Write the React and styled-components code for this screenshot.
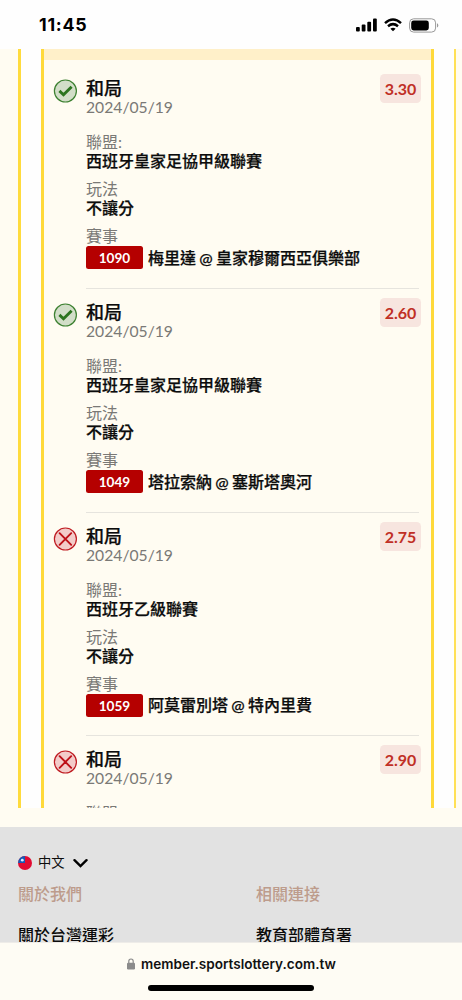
import React from 'react';
import styled, { createGlobalStyle } from 'styled-components';

const GlobalStyle = createGlobalStyle`
  * { box-sizing: border-box; }
  body { margin: 0; background: #fffcf2; }
`;

const Screen = styled.div`
  width: 462px;
  height: 1000px;
  overflow: hidden;
  display: flex;
  flex-direction: column;
  background: #fffcf2;
  color: #0c0c0c;
  font-family: Lato, 'Noto Sans CJK TC', sans-serif;
  font-size: 16px;
  white-space: nowrap;
`;

const StatusBar = styled.header`
  flex: 0 0 49px;
  display: flex;
  justify-content: space-between;
  align-items: center;
  padding: 1px 23px 0 39px;
  background: #fefefe;
`;

const Clock = styled.span`
  font: 700 17.8px/24px Inter, sans-serif;
  letter-spacing: 0.75px;
  color: #000;
`;

const StatusIcons = styled.div`
  display: flex;
  align-items: center;
  gap: 7px;
  svg { display: block; }
`;

const Page = styled.main`
  flex: 0 0 778px;
  height: 778px;
  padding-bottom: 19px;
  display: flex;
`;

const OuterCard = styled.div`
  width: 438px;
  margin-left: 18px;
  display: flex;
  border-left: 3px solid #ffdb3d;
  border-right: 2px solid #ffe056;
  background: #fefefe;
  padding: 0 20px;
`;

const Ticket = styled.section`
  flex: 1;
  overflow: hidden;
  border: solid #ffd93a;
  border-width: 0 3px;
  background: #fffcf2;
`;

const Band = styled.div`
  height: 11px;
  margin-bottom: 5px;
  background: #fff0c9;
`;

const Bet = styled.article`
  height: 223.8px;
  display: flex;
  padding: 0 12px 0 9px;
`;

const IconSlot = styled.div`
  flex: 0 0 33px;
  padding-top: 14px;
  svg { display: block; }
`;

const BetBody = styled.div`
  flex: 1;
  border-bottom: 1.5px solid #e6e4de;
`;

const BetHead = styled.div`
  display: flex;
  justify-content: space-between;
  height: 52px;
  padding-top: 11px;
`;

const Title = styled.div`
  font-size: 18px;
  font-weight: 500;
  line-height: 24px;
  -webkit-text-stroke: 0.25px currentColor;
`;

const DateText = styled.div`
  color: #7a7976;
  font-size: 15.7px;
  line-height: 14px;
`;

const Odds = styled.div`
  width: 41px;
  height: 29px;
  margin: -2px -2px 0 0;
  border-radius: 4.5px;
  background: #f7e5df;
  color: #c02f25;
  font-size: 16px;
  font-weight: 700;
  line-height: 30px;
  text-align: center;
`;

const Field = styled.div`
  height: 47.2px;
  padding-top: 15px;
`;

const Label = styled.div`
  color: #7a7976;
  line-height: 19px;
`;

const Value = styled.div`
  display: flex;
  align-items: center;
  gap: 5px;
  font-weight: 500;
  line-height: 19px;
  word-spacing: -0.8px;
  -webkit-text-stroke: 0.25px currentColor;
`;

const MatchNo = styled.span`
  width: 57px;
  height: 23px;
  margin-top: 1px;
  border-radius: 2.5px;
  background: #b50000;
  color: #fff;
  font-size: 13.6px;
  font-weight: 700;
  line-height: 24px;
  text-align: center;
  -webkit-text-stroke: 0;
`;

const Footer = styled.footer`
  flex: 0 0 115px;
  overflow: hidden;
  padding: 26px 18px 0;
  background: #e2e2e2;
`;

const Language = styled.div`
  display: flex;
  align-items: center;
  height: 20px;
  font-size: 13.3px;
  span { margin: -2px 8px 0 6px; line-height: 20px; }
  svg { display: block; }
`;

const Links = styled.div`
  display: grid;
  grid-template-columns: 238px 1fr;
  line-height: 24px;
`;

const LinkHeading = styled.div`
  margin: 9px 0 17px;
  color: #bd9c8c;
  font-weight: 500;
`;

const LinkItem = styled.div`
  font-weight: 500;
`;

const BrowserBar = styled.div`
  flex: 1;
  display: flex;
  flex-direction: column;
  align-items: center;
  background: #fefcf4;
  border-top: 1px solid #eeece8;
`;

const Address = styled.div`
  display: flex;
  align-items: center;
  gap: 6px;
  height: 20px;
  margin: 11px 0 11px 1px;
  font: 600 13.55px/20px Inter, sans-serif;
  color: #111;
`;

const HomeIndicator = styled.div`
  width: 166px;
  height: 6px;
  border-radius: 3px;
  background: #000;
`;

const bets = [
  { won: true, odds: '3.30', league: '西班牙皇家足協甲級聯賽', no: '1090', match: '梅里達 @ 皇家穆爾西亞俱樂部' },
  { won: true, odds: '2.60', league: '西班牙皇家足協甲級聯賽', no: '1049', match: '塔拉索納 @ 塞斯塔奧河' },
  { won: false, odds: '2.75', league: '西班牙乙級聯賽', no: '1059', match: '阿莫雷別塔 @ 特內里費' },
  { won: false, odds: '2.90', league: '', no: '', match: '' },
];

function ResultIcon({ won }) {
  return (
    <svg width="24" height="24" viewBox="0 0 24 24" fill="none">
      <circle cx="12.4" cy="12" r="11" fill={won ? '#d2dec8' : '#f3ccc9'} stroke={won ? '#3d8131' : '#bf1c22'} strokeWidth="1.2" />
      {won ? (
        <path d="M6.4 11.9 10.5 15.7 18.6 7.8" stroke="#2b741e" strokeWidth="2.9" />
      ) : (
        <path d="m6.6 6.2 11.6 11.6M18.2 6.2 6.6 17.8" stroke="#bd1017" strokeWidth="1.9" strokeLinecap="round" />
      )}
    </svg>
  );
}

function BetRow({ bet }) {
  return (
    <Bet>
      <IconSlot><ResultIcon won={bet.won} /></IconSlot>
      <BetBody>
        <BetHead>
          <div>
            <Title>和局</Title>
            <DateText>2024/05/19</DateText>
          </div>
          <Odds>{bet.odds}</Odds>
        </BetHead>
        <Field>
          <Label>聯盟:</Label>
          <Value>{bet.league}</Value>
        </Field>
        {bet.no && (
          <>
            <Field>
              <Label>玩法</Label>
              <Value>不讓分</Value>
            </Field>
            <Field>
              <Label>賽事</Label>
              <Value><MatchNo>{bet.no}</MatchNo>{bet.match}</Value>
            </Field>
          </>
        )}
      </BetBody>
    </Bet>
  );
}

export default function App() {
  return (
    <Screen>
      <GlobalStyle />
      <StatusBar>
        <Clock>11:45</Clock>
        <StatusIcons>
          <svg width="21" height="14" viewBox="0 0 21 14">
            <rect x="0" y="9" width="3.8" height="4.6" rx="1" />
            <rect x="5.7" y="6.5" width="3.8" height="7.1" rx="1" />
            <rect x="11.3" y="3.7" width="3.8" height="9.9" rx="1" />
            <rect x="17" y="0.5" width="3.8" height="13.1" rx="1" />
          </svg>
          <svg width="18" height="14" viewBox="0 0 18 14" fill="none" stroke="#000" strokeWidth="2.5">
            <path d="M1 5.1Q9-2 17 5.1" />
            <path d="M4 8.2Q9 4 14 8.2" />
            <path d="M9 13.3 6.4 10.7Q9 8.7 11.6 10.7Z" fill="#000" stroke="none" />
          </svg>
          <svg width="30" height="15" viewBox="0 0 30 15">
            <rect x="0.6" y="0.8" width="26" height="13.3" rx="4" fill="none" stroke="#999" />
            <rect x="2.2" y="2.5" width="17.6" height="9.9" rx="2.4" />
            <path d="M28 5.2Q29.3 5.8 29.3 7.4T28 9.6Z" fill="#999" />
          </svg>
        </StatusIcons>
      </StatusBar>
      <Page>
        <OuterCard>
          <Ticket>
            <Band />
            {bets.map((bet) => <BetRow key={bet.odds} bet={bet} />)}
          </Ticket>
        </OuterCard>
      </Page>
      <Footer>
        <Language>
          <svg width="14" height="14" viewBox="0 0 14 14">
            <circle cx="7" cy="7" r="7" fill="#e20b32" />
            <path d="M0 7A7 7 0 0 1 7 0V7Z" fill="#1759b5" />
            <circle cx="4.3" cy="4.2" r="1.4" fill="#dcecff" />
          </svg>
          <span>中文</span>
          <svg width="15" height="10" viewBox="0 0 15 10" fill="none">
            <path d="M1.5 2.2 7.5 8 13.5 2.2" stroke="#000" strokeWidth="2.4" strokeLinecap="round" />
          </svg>
        </Language>
        <Links>
          <div>
            <LinkHeading>關於我們</LinkHeading>
            <LinkItem>關於台灣運彩</LinkItem>
          </div>
          <div>
            <LinkHeading>相關連接</LinkHeading>
            <LinkItem>教育部體育署</LinkItem>
          </div>
        </Links>
      </Footer>
      <BrowserBar>
        <Address>
          <svg width="8" height="12" viewBox="0 0 8 12">
            <rect x="0" y="4.8" width="8" height="6.7" rx="1.2" fill="#8b8b8b" />
            <path d="M1.8 5V3.2a2.2 2.2 0 0 1 4.4 0V5" fill="none" stroke="#8b8b8b" strokeWidth="1.2" />
          </svg>
          member.sportslottery.com.tw
        </Address>
        <HomeIndicator />
      </BrowserBar>
    </Screen>
  );
}
